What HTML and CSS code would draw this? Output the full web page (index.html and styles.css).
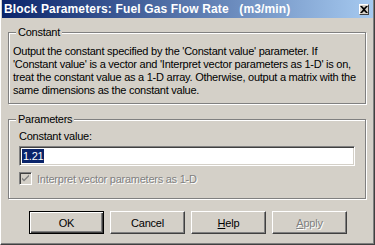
FILE: index.html
```html
<!DOCTYPE html>
<html>
<head>
<meta charset="utf-8">
<link rel="stylesheet" href="styles.css">
</head>
<body>
<div class="window">
  <div class="titlebar">
    <span class="title">Block Parameters: Fuel Gas Flow Rate&nbsp;&nbsp; (m3/min)</span>
    <span class="close"><svg width="8" height="7" viewBox="0 0 8 7"><path d="M0 0h2l2 2 2-2h2L5 3.5 8 7H6L4 5 2 7H0l3-3.5z" fill="#000"/></svg></span>
  </div>
  <div class="body">
    <div class="group group-desc">
      <span class="legend">Constant</span>
      <p class="desc">Output the constant specified by the 'Constant value' parameter. If<br>'Constant value' is a vector and 'Interpret vector parameters as 1-D' is on,<br>treat the constant value as a 1-D array. Otherwise, output a matrix with the<br>same dimensions as the constant value.</p>
    </div>
    <div class="group group-params">
      <span class="legend">Parameters</span>
      <div class="field-label">Constant value:</div>
      <div class="edit"><span class="sel">1.21</span></div>
      <div class="check-row">
        <span class="checkbox"><svg width="9" height="9" viewBox="0 0 9 9"><path d="M1 3.5l2 2 5-5v2l-5 5-2-2z" fill="#808080"/></svg></span>
        <span class="disabled">Interpret vector parameters as 1-D</span>
      </div>
    </div>
    <div class="buttons">
      <button class="btn default">OK</button>
      <button class="btn">Cancel</button>
      <button class="btn"><u>H</u>elp</button>
      <button class="btn"><span class="disabled"><u>A</u>pply</span></button>
    </div>
  </div>
</div>
</body>
</html>
```
FILE: styles.css
```css
html, body {
  margin: 0;
  padding: 0;
  background: #d4d0c8;
}
body {
  font-family: "Liberation Sans", Arial, sans-serif;
  font-size: 11px;
  letter-spacing: -0.25px;
  color: #000;
}
.window {
  width: 375px;
  height: 245px;
  box-sizing: border-box;
  border-left: 1px solid #ffffff;
  border-right: 1px solid #404040;
  border-bottom: 1px solid #404040;
  box-shadow: inset -1px -1px 0 #808080, inset 1px 0 0 #d4d0c8;
  padding: 0 2px 0 2px;
  display: flex;
  flex-direction: column;
}
.titlebar {
  height: 18px;
  margin: 0 -1px;
  background: linear-gradient(to right, #0a246a, #a6caf0);
  display: flex;
  align-items: center;
  justify-content: space-between;
  padding: 0 0 0 2px;
}
.title {
  color: #fff;
  font-weight: bold;
  font-size: 12px;
  letter-spacing: 0.15px;
  white-space: nowrap;
}
.close {
  width: 10px;
  height: 11px;
  box-sizing: border-box;
  margin-right: 4px;
  background: #d4d0c8;
  border-top: 1px solid #fff;
  border-left: 1px solid #fff;
  border-right: 1px solid #404040;
  border-bottom: 1px solid #404040;
  display: flex;
  align-items: center;
  justify-content: center;
}
.body {
  padding: 14px 5px 0 5px;
  display: flex;
  flex-direction: column;
}
.group {
  position: relative;
  border: 1px solid #808080;
  box-shadow: 1px 1px 0 #fff, inset 1px 1px 0 #fff;
  margin-right: 1px;
}
.legend {
  position: absolute;
  top: -8px;
  left: 7px;
  padding: 0 2px;
  background: #d4d0c8;
  line-height: 14px;
}
.group-desc {
  height: 72px;
  box-sizing: border-box;
  padding: 12px 0 0 4px;
}
.desc {
  margin: 0;
  line-height: 13px;
  white-space: nowrap;
}
.group-params {
  margin-top: 15px;
  height: 80px;
  box-sizing: border-box;
  padding: 10px 10px 0 10px;
}
.field-label {
  line-height: 13px;
}
.edit {
  margin-top: 3px;
  height: 20px;
  box-sizing: border-box;
  background: #fff;
  border-top: 1px solid #808080;
  border-left: 1px solid #808080;
  border-right: 1px solid #fff;
  border-bottom: 1px solid #fff;
  box-shadow: inset 1px 1px 0 #404040, inset -1px -1px 0 #d4d0c8;
  padding: 2px 0 0 2px;
}
.sel {
  display: inline-block;
  background: #0a246a;
  color: #fff;
  line-height: 14px;
  padding: 0 1px;
}
.check-row {
  margin-top: 6px;
  display: flex;
  align-items: center;
  gap: 5px;
}
.checkbox {
  width: 13px;
  height: 13px;
  box-sizing: border-box;
  background: #d4d0c8;
  border-top: 1px solid #808080;
  border-left: 1px solid #808080;
  border-right: 1px solid #fff;
  border-bottom: 1px solid #fff;
  box-shadow: inset 1px 1px 0 #404040, inset -1px -1px 0 #d4d0c8;
  display: flex;
  align-items: center;
  justify-content: center;
}
.disabled {
  color: #808080;
  text-shadow: 1px 1px 0 #fff;
}
.buttons {
  margin-top: 12px;
  display: flex;
  gap: 6px;
  padding-left: 21px;
}
.btn {
  width: 75px;
  height: 23px;
  box-sizing: border-box;
  font-family: "Liberation Sans", Arial, sans-serif;
  font-size: 11px;
  letter-spacing: -0.2px;
  color: #000;
  background: #d4d0c8;
  border-top: 1px solid #fff;
  border-left: 1px solid #fff;
  border-right: 1px solid #404040;
  border-bottom: 1px solid #404040;
  box-shadow: inset -1px -1px 0 #808080;
  padding: 0;
  margin: 0;
}
.btn.default {
  border: 1px solid #000;
  box-shadow: inset 1px 1px 0 #fff, inset -1px -1px 0 #404040, inset -2px -2px 0 #808080;
}
```
